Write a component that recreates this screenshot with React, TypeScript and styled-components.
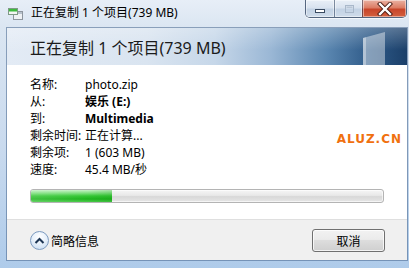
import React from "react";
import styled, { createGlobalStyle } from "styled-components";

const Global = createGlobalStyle`
  html, body { margin: 0; padding: 0; width: 409px; height: 268px; overflow: hidden; background: #fff; }
  #root { width: 409px; height: 268px; }
`;

const FONT = `"Noto Sans", "Noto Sans CJK SC", sans-serif`;

const Window = styled.div`
  width: 409px;
  height: 268px;
  box-sizing: border-box;
  display: flex;
  flex-direction: column;
  font-family: ${FONT};
  color: #000;
  background: linear-gradient(180deg, #e7eef7 0%, #dbe6f2 10%, #c9daee 55%, #aecbea 100%);
`;

const TitleBar = styled.div`
  height: 28px;
  flex: none;
  display: flex;
  align-items: flex-start;
  padding: 0 2px 0 8px;
  box-sizing: border-box;
`;

const TitleLeft = styled.div`
  height: 26px;
  display: flex;
  align-items: center;
  gap: 8px;
`;

const TitleText = styled.span`
  font-size: 12px;
  color: #000;
  line-height: 1;
  white-space: nowrap;
`;

const CaptionGroup = styled.div`
  margin-left: auto;
  display: flex;
  height: 17px;
  border: 1px solid rgba(38, 58, 88, 0.75);
  border-top: none;
  border-radius: 0 0 5px 5px;
  overflow: hidden;
  box-shadow: 0 1px 0 rgba(255, 255, 255, 0.7);
`;

const CaptionBtn = styled.div<{ $kind: "min" | "max" | "close" }>`
  width: ${(p) => (p.$kind === "close" ? 44 : p.$kind === "max" ? 28 : 28)}px;
  height: 100%;
  display: flex;
  align-items: center;
  justify-content: center;
  box-sizing: border-box;
  border-left: ${(p) => (p.$kind === "min" ? "none" : "1px solid rgba(40, 60, 90, 0.55)")};
  box-shadow: inset 0 0 0 1px rgba(255, 255, 255, 0.45);
  background: ${(p) =>
    p.$kind === "close"
      ? "linear-gradient(180deg, #eab2a3 0%, #dc7c64 45%, #c8452a 55%, #d3603f 100%)"
      : "linear-gradient(180deg, #e9eff7 0%, #d9e3ef 45%, #c3d2e4 55%, #cfdcea 100%)"};
`;

const Frame = styled.div`
  flex: 1;
  display: flex;
  padding: 0 2px 8px 7px;
  min-height: 0;
`;

const Client = styled.div`
  flex: 1;
  display: flex;
  flex-direction: column;
  background: #fff;
  outline: 1px solid rgba(70, 100, 140, 0.55);
  overflow: hidden;
`;

const Header = styled.div`
  position: relative;
  height: 37px;
  flex: none;
  display: flex;
  align-items: center;
  padding-left: 23px;
  background:
    linear-gradient(180deg, rgba(255, 255, 255, 0.25) 0%, rgba(255, 255, 255, 0) 60%),
    linear-gradient(90deg, #e3ebf5 0%, #d9e4f0 35%, #c6d7e9 52%, #9ab7d5 66%, #5a86b0 80%, #2e5a88 91%, #1b3f69 100%);
`;

const HeaderText = styled.span`
  font-size: 16px;
  color: #1b1b1b;
  white-space: nowrap;
  position: relative;
`;

const Glass = styled.svg`
  position: absolute;
  right: 0;
  top: 0;
`;

const Body = styled.div`
  position: relative;
  flex: 1;
  padding: 11px 23px 0;
  background: #fff;
`;

const InfoGrid = styled.div`
  display: grid;
  grid-template-columns: 55px 1fr;
  grid-auto-rows: 17px;
  font-size: 12px;
  line-height: 17px;
`;

const Label = styled.span`
  color: #000;
  white-space: nowrap;
`;

const Value = styled.span<{ $bold?: boolean }>`
  color: #000;
  font-weight: ${(p) => (p.$bold ? 700 : 400)};
  white-space: nowrap;
`;

const Watermark = styled.span`
  position: absolute;
  right: 5px;
  top: 67px;
  font-family: "DejaVu Sans", sans-serif;
  font-weight: 700;
  font-size: 12px;
  letter-spacing: 1px;
  color: #f0700f;
`;

const Progress = styled.div`
  margin-top: 11px;
  height: 14px;
  box-sizing: border-box;
  border: 1px solid #b4b4b4;
  border-radius: 3px;
  overflow: hidden;
  background: linear-gradient(180deg, #f6f6f6 0%, #e8e8e8 45%, #d8d8d8 55%, #e6e6e6 100%);
  box-shadow: inset 0 0 0 1px rgba(255, 255, 255, 0.6);
`;

const Fill = styled.div<{ $pct: number }>`
  width: ${(p) => p.$pct}%;
  height: 100%;
  background:
    linear-gradient(90deg, rgba(255, 255, 255, 0.15) 0%, rgba(255, 255, 255, 0) 70%, rgba(0, 120, 0, 0.15) 100%),
    linear-gradient(180deg, #c8f2c8 0%, #72dc72 30%, #34c734 50%, #1fb41f 75%, #4ccc4c 100%);
`;

const Footer = styled.div`
  height: 41px;
  flex: none;
  box-sizing: border-box;
  display: flex;
  align-items: center;
  justify-content: space-between;
  padding: 1px 22px 0 23px;
  background: #f0f0f0;
  border-top: 1px solid #dfdfdf;
`;

const Toggle = styled.div`
  display: flex;
  align-items: center;
  gap: 2px;
  font-size: 12px;
  color: #000;
`;

const Chevron = styled.div`
  width: 19px;
  height: 19px;
  box-sizing: border-box;
  border-radius: 50%;
  border: 1px solid #7d9bc0;
  background: radial-gradient(circle at 50% 30%, #ffffff 0%, #e8f1fb 45%, #c3d8ef 100%);
  display: flex;
  align-items: center;
  justify-content: center;
`;

const Button = styled.div`
  width: 73px;
  height: 23px;
  box-sizing: border-box;
  border: 1px solid #707070;
  border-radius: 3px;
  background: linear-gradient(180deg, #f2f2f2 0%, #ebebeb 45%, #dddddd 50%, #cfcfcf 100%);
  box-shadow: inset 0 0 0 1px rgba(255, 255, 255, 0.75);
  display: flex;
  align-items: center;
  justify-content: center;
  font-size: 12px;
  color: #000;
`;

const rows: { label: string; value: string; bold?: boolean }[] = [
  { label: "名称:", value: "photo.zip" },
  { label: "从:", value: "娱乐 (E:)", bold: true },
  { label: "到:", value: "Multimedia", bold: true },
  { label: "剩余时间:", value: "正在计算..." },
  { label: "剩余项:", value: "1 (603 MB)" },
  { label: "速度:", value: "45.4 MB/秒" },
];

export default function App() {
  return (
    <>
      <Global />
      <Window>
        <TitleBar>
          <TitleLeft>
            <svg width="15" height="13" viewBox="0 0 15 13">
              <rect x="5.5" y="4.5" width="9" height="8" fill="#eef1f4" stroke="#8e969e" />
              <rect x="6" y="5" width="8" height="2" fill="#b8c2cc" />
              <rect x="0.5" y="1.5" width="9" height="6" fill="#f4f6f4" stroke="#7f9a86" />
              <rect x="1" y="2" width="8" height="2.5" fill="#3dbb3d" />
            </svg>
            <TitleText>正在复制 1 个项目(739 MB)</TitleText>
          </TitleLeft>
          <CaptionGroup>
            <CaptionBtn $kind="min">
              <svg width="12" height="14" viewBox="0 0 12 14">
                <rect x="1.5" y="7.5" width="9" height="3" fill="#fff" stroke="#3a4b61" />
              </svg>
            </CaptionBtn>
            <CaptionBtn $kind="max">
              <svg width="12" height="14" viewBox="0 0 12 14">
                <rect x="2.5" y="3.5" width="8" height="7" fill="none" stroke="#a9b8ca" />
                <rect x="3.5" y="4.5" width="6" height="1.5" fill="#b9c6d5" />
              </svg>
            </CaptionBtn>
            <CaptionBtn $kind="close">
              <svg width="16" height="14" viewBox="0 0 16 14">
                <path d="M3 2 L13 12 M13 2 L3 12" stroke="#4a1a12" strokeWidth="4.2" strokeLinecap="square" />
                <path d="M3 2 L13 12 M13 2 L3 12" stroke="#fff" strokeWidth="2.4" strokeLinecap="square" />
              </svg>
            </CaptionBtn>
          </CaptionGroup>
        </TitleBar>
        <Frame>
          <Client>
            <Header>
              <Glass width="52" height="37" viewBox="0 0 52 37">
                <polygon points="8,10 30,4 30,37 8,37" fill="rgba(255,255,255,0.42)" />
                <polygon points="8,10 11,9.2 11,37 8,37" fill="rgba(255,255,255,0.35)" />
              </Glass>
              <HeaderText>正在复制 1 个项目(739 MB)</HeaderText>
            </Header>
            <Body>
              <InfoGrid>
                {rows.map((r) => (
                  <React.Fragment key={r.label}>
                    <Label>{r.label}</Label>
                    <Value $bold={r.bold}>{r.value}</Value>
                  </React.Fragment>
                ))}
              </InfoGrid>
              <Progress>
                <Fill $pct={23} />
              </Progress>
              <Watermark>ALUZ.CN</Watermark>
            </Body>
            <Footer>
              <Toggle>
                <Chevron>
                  <svg width="11" height="8" viewBox="0 0 11 8">
                    <path d="M1.5 6 L5.5 2 L9.5 6" fill="none" stroke="#1c3554" strokeWidth="2" />
                  </svg>
                </Chevron>
                <span>简略信息</span>
              </Toggle>
              <Button>取消</Button>
            </Footer>
          </Client>
        </Frame>
      </Window>
    </>
  );
}
